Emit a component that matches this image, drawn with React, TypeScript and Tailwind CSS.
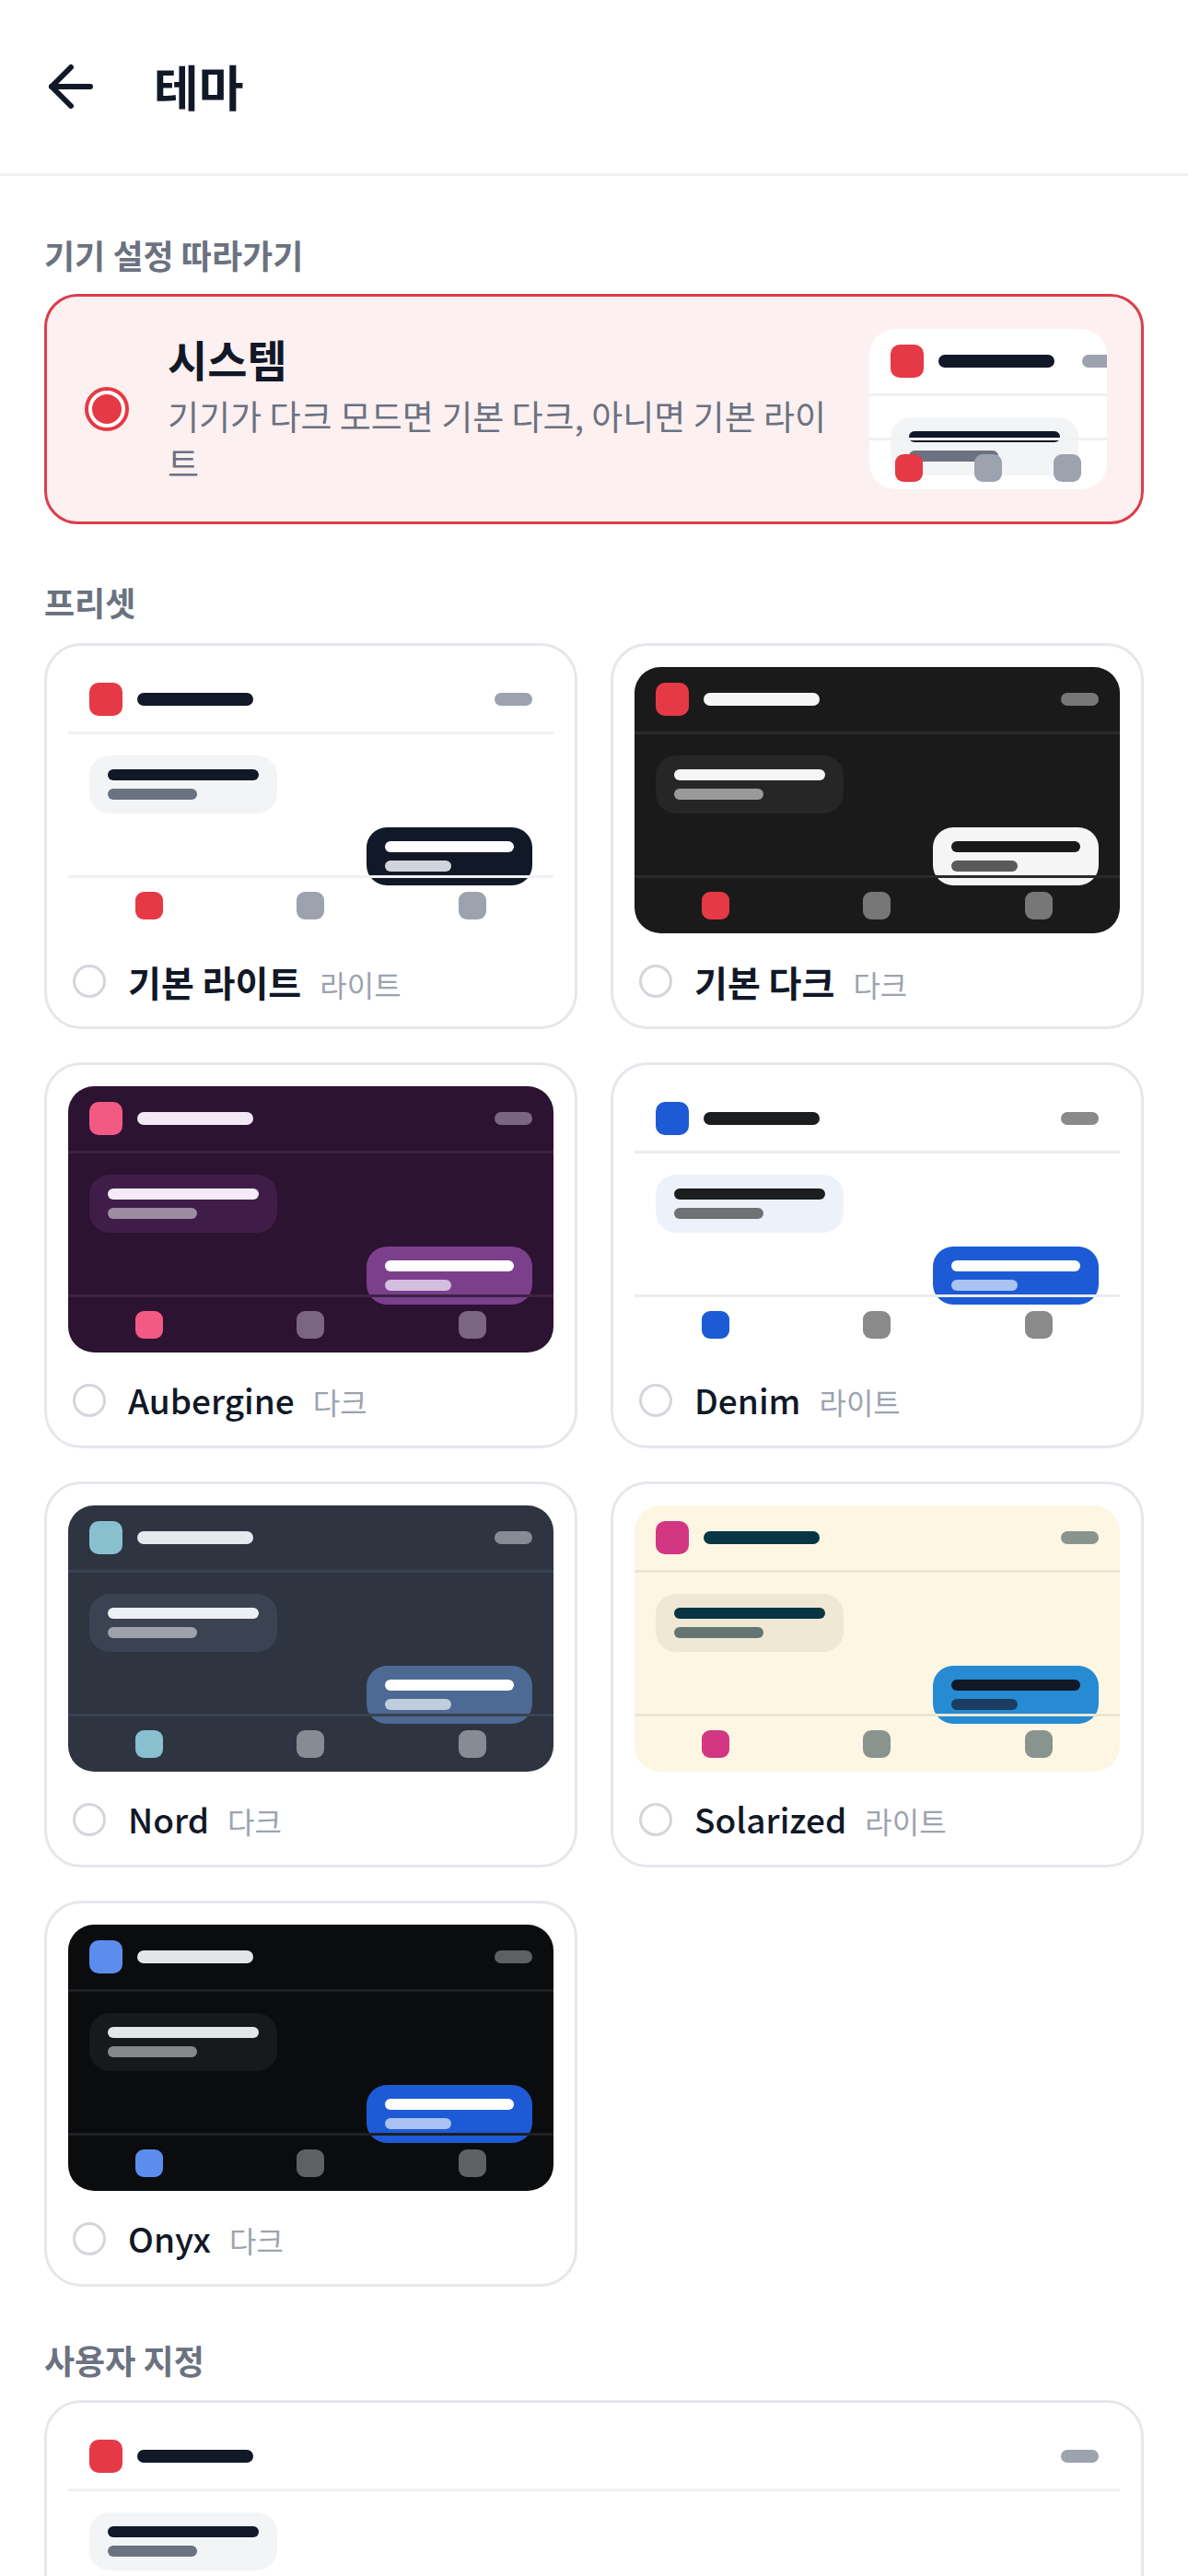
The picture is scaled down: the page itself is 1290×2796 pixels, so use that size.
import { ArrowLeft } from "lucide-react";

type Theme = {
  name: string;
  latin?: boolean;
  mode: string;
  bg: string;
  line: string;
  accent: string;
  title: string;
  pill: string;
  inBg: string;
  inA: string;
  inB: string;
  outBg: string;
  outA: string;
  outB: string;
  nav: string;
};

const light: Theme = {
  name: "기본 라이트",
  mode: "라이트",
  bg: "bg-white",
  line: "border-[#f1f1f3]",
  accent: "bg-[#e63946]",
  title: "bg-[#111827]",
  pill: "bg-[#9ca3af]",
  inBg: "bg-[#f3f4f6]",
  inA: "bg-[#111827]",
  inB: "bg-[#6b7280]",
  outBg: "bg-[#111827]",
  outA: "bg-white",
  outB: "bg-[#d1d5db]",
  nav: "bg-[#9ca3af]",
};

const presets: Theme[] = [
  light,
  {
    name: "기본 다크",
    mode: "다크",
    bg: "bg-[#1a1a1a]",
    line: "border-[#2a2a2a]",
    accent: "bg-[#e63946]",
    title: "bg-[#f5f5f5]",
    pill: "bg-[#777777]",
    inBg: "bg-[#262626]",
    inA: "bg-[#f5f5f5]",
    inB: "bg-[#9a9a9a]",
    outBg: "bg-[#f5f5f5]",
    outA: "bg-[#1a1a1a]",
    outB: "bg-[#5a5a5a]",
    nav: "bg-[#777777]",
  },
  {
    name: "Aubergine",
    latin: true,
    mode: "다크",
    bg: "bg-[#2c1331]",
    line: "border-[#3d2243]",
    accent: "bg-[#f25a84]",
    title: "bg-[#f3e8f6]",
    pill: "bg-[#7a6582]",
    inBg: "bg-[#3f1d48]",
    inA: "bg-[#f5eaf8]",
    inB: "bg-[#9c8ba2]",
    outBg: "bg-[#7b3f8c]",
    outA: "bg-white",
    outB: "bg-[#d4bde0]",
    nav: "bg-[#7a6582]",
  },
  {
    name: "Denim",
    latin: true,
    mode: "라이트",
    bg: "bg-white",
    line: "border-[#ececec]",
    accent: "bg-[#1d5bd6]",
    title: "bg-[#1c1d1f]",
    pill: "bg-[#8a8a8a]",
    inBg: "bg-[#edf2fa]",
    inA: "bg-[#1c1d1f]",
    inB: "bg-[#6f7175]",
    outBg: "bg-[#1d5bd6]",
    outA: "bg-white",
    outB: "bg-[#a9c3f2]",
    nav: "bg-[#8a8a8a]",
  },
  {
    name: "Nord",
    latin: true,
    mode: "다크",
    bg: "bg-[#2e3440]",
    line: "border-[#3b4252]",
    accent: "bg-[#88c0d0]",
    title: "bg-[#e5e9f0]",
    pill: "bg-[#878b93]",
    inBg: "bg-[#3b4252]",
    inA: "bg-[#eceff4]",
    inB: "bg-[#9ca1ab]",
    outBg: "bg-[#4c6a93]",
    outA: "bg-white",
    outB: "bg-[#c0cddd]",
    nav: "bg-[#878b93]",
  },
  {
    name: "Solarized",
    latin: true,
    mode: "라이트",
    bg: "bg-[#fdf6e3]",
    line: "border-[#eae6d6]",
    accent: "bg-[#d33682]",
    title: "bg-[#073642]",
    pill: "bg-[#8a948f]",
    inBg: "bg-[#eee8d5]",
    inA: "bg-[#073642]",
    inB: "bg-[#657672]",
    outBg: "bg-[#268bd2]",
    outA: "bg-[#111827]",
    outB: "bg-[#1b3d61]",
    nav: "bg-[#8a948f]",
  },
  {
    name: "Onyx",
    latin: true,
    mode: "다크",
    bg: "bg-[#0b0c0e]",
    line: "border-[#1f2023]",
    accent: "bg-[#5b8def]",
    title: "bg-[#e4e5e7]",
    pill: "bg-[#5f6064]",
    inBg: "bg-[#18191c]",
    inA: "bg-[#e4e5e7]",
    inB: "bg-[#86878b]",
    outBg: "bg-[#1d5bd6]",
    outA: "bg-white",
    outB: "bg-[#a9c2f2]",
    nav: "bg-[#5f6064]",
  },
];

// mini chat screen: top bar, two bubbles, bottom nav
function Preview({ t, box, inner }: { t: Theme; box: string; inner: string }) {
  return (
    <div className={`overflow-hidden rounded-[28px] ${t.bg} ${box}`}>
      <div className={`flex flex-col ${inner}`}>
        <div
          className={`flex h-[73px] shrink-0 items-center justify-between gap-[30px] border-b-[3px] px-[23px] ${t.line}`}
        >
          <div className="flex shrink-0 items-center gap-[16px]">
            <div className={`h-[36px] w-[36px] rounded-[10px] ${t.accent}`} />
            <div className={`h-[14px] w-[126px] rounded-full ${t.title}`} />
          </div>
          <div className={`h-[14px] w-[41px] shrink-0 rounded-full ${t.pill}`} />
        </div>
        <div className="flex min-h-0 flex-1 flex-col gap-[15px] px-[23px] pt-[23px]">
          <div className={`flex w-[204px] shrink-0 flex-col gap-[9px] rounded-[22px] px-[20px] py-[15px] ${t.inBg}`}>
            <div className={`h-[12px] w-full rounded-full ${t.inA}`} />
            <div className={`h-[12px] w-[97px] rounded-full ${t.inB}`} />
          </div>
          <div
            className={`flex w-[180px] shrink-0 flex-col gap-[9px] self-end rounded-[22px] px-[20px] py-[15px] ${t.outBg}`}
          >
            <div className={`h-[12px] w-full rounded-full ${t.outA}`} />
            <div className={`h-[12px] w-[72px] rounded-full ${t.outB}`} />
          </div>
        </div>
        <div className={`flex h-[63px] shrink-0 items-center justify-around border-t-[3px] ${t.line}`}>
          <div className={`h-[30px] w-[30px] rounded-[9px] ${t.accent}`} />
          <div className={`h-[30px] w-[30px] rounded-[9px] ${t.nav}`} />
          <div className={`h-[30px] w-[30px] rounded-[9px] ${t.nav}`} />
        </div>
      </div>
    </div>
  );
}

function Radio() {
  return <div className="h-[36px] w-[36px] shrink-0 rounded-full border-[3px] border-[#d4d6db]" />;
}

function ThemeCard({ t }: { t: Theme }) {
  return (
    <button
      type="button"
      className="flex h-[419px] flex-col rounded-[40px] border-[3px] border-[#e5e7eb] bg-white p-[23px] text-left"
    >
      <Preview t={t} box="h-[289px] w-full shrink-0" inner="h-full" />
      <div className="mt-[26px] flex h-[52px] items-center gap-[24px] pl-[5px]">
        <Radio />
        <div className="flex items-baseline gap-[20px]">
          <span
            className={
              t.latin ? "text-[37px] font-medium text-[#111827]" : "text-[39px] font-bold text-[#111827]"
            }
          >
            {t.name}
          </span>
          <span className="text-[32px] text-[#9ca3af]">{t.mode}</span>
        </div>
      </div>
    </button>
  );
}

function SectionLabel({ children }: { children: string }) {
  return <div className="flex h-[44px] items-center text-[36px] font-bold text-[#6b7280]">{children}</div>;
}

export default function App() {
  return (
    <div
      className="h-screen overflow-hidden bg-white"
      style={{ fontFamily: '"Noto Sans CJK KR", "Noto Sans", sans-serif' }}
    >
      <header className="flex h-[191px] items-center gap-[54px] border-b-[3px] border-[#f0f0f2] pl-[41px]">
        <ArrowLeft size={72} strokeWidth={2} className="text-[#111827]" />
        <h1 className="text-[53px] font-bold text-[#111827]">테마</h1>
      </header>

      <main className="px-[48px] pt-[63px]">
        <SectionLabel>기기 설정 따라가기</SectionLabel>
        <div className="mt-[21px] flex h-[250px] items-center rounded-[36px] border-[3px] border-[#dc3d4b] bg-[#fdf0f0] pl-[41px] pr-[37px]">
          <div className="flex h-[48px] w-[48px] shrink-0 items-center justify-center rounded-full border-[4px] border-[#e63946] bg-white">
            <div className="h-[32px] w-[32px] rounded-full bg-[#e63946]" />
          </div>
          <div className="ml-[42px] mr-[30px] flex min-w-0 flex-1 flex-col">
            <div className="text-[47px] font-bold leading-[1.25] text-[#111827]">시스템</div>
            <div className="mt-[8px] text-[37px] leading-[51px] text-[#6b7280]">
              기기가 다크 모드면 기본 다크, 아니면 기본 라이트
            </div>
          </div>
          <Preview t={light} box="h-[174px] w-[258px] shrink-0" inner="h-[181px] w-full" />
        </div>

        <div className="mt-[62px]">
          <SectionLabel>프리셋</SectionLabel>
        </div>
        <div className="mt-[23px] grid grid-cols-2 gap-[36px]">
          {presets.map((t) => (
            <ThemeCard key={t.name} t={t} />
          ))}
        </div>

        <div className="mt-[57px]">
          <SectionLabel>사용자 지정</SectionLabel>
        </div>
        <div className="mt-[22px] flex flex-col rounded-[40px] border-[3px] border-[#e5e7eb] bg-white p-[23px]">
          <Preview t={light} box="h-[289px] w-full" inner="h-full" />
        </div>
      </main>
    </div>
  );
}
